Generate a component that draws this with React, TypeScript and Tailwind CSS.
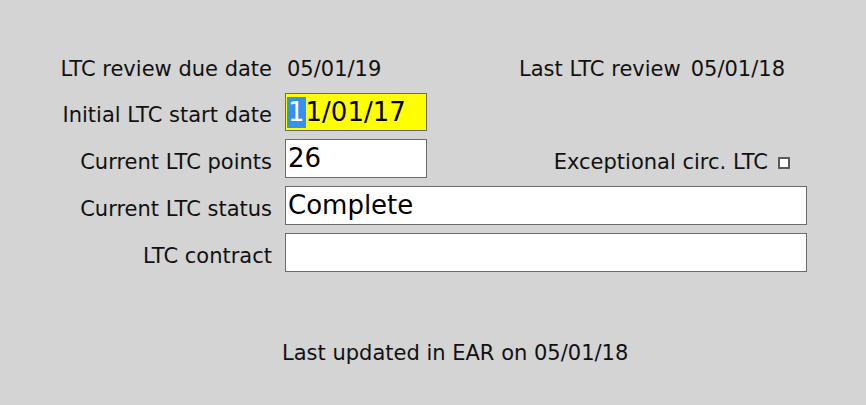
import React from "react";

const font = { fontFamily: '"DejaVu Sans", Verdana, sans-serif' };

export default function App() {
  return (
    <div
      className="w-[866px] h-[405px] bg-[#d4d4d4] text-[21px] text-[#111] relative overflow-hidden"
      style={font}
    >
      <div className="pt-[51px] grid grid-cols-[272px_522px] gap-x-[13px]">
        {/* Row 1 */}
        <div className="h-[38px] flex items-center justify-end whitespace-nowrap">LTC review due date</div>
        <div className="h-[38px] flex items-center justify-between pr-[22px] whitespace-nowrap">
          <span className="pl-[2px]">05/01/19</span>
          <span>
            Last LTC review<span className="ml-[10px]">05/01/18</span>
          </span>
        </div>

        {/* Row 2 */}
        <div className="mt-[4px] h-[38px] pt-[8px] flex items-center justify-end whitespace-nowrap">Initial LTC start date</div>
        <div className="mt-[4px] h-[38px]">
          <div className="w-[142px] h-[38px] bg-[#ffff00] border border-[#6b6b6b] flex items-center pl-[1px] text-[26px] text-black">
            <span className="bg-[#3591f0] text-white px-[1px] leading-[31px]">1</span>
            <span>1/01/17</span>
          </div>
        </div>

        {/* Row 3 */}
        <div className="mt-[8px] h-[39px] pt-[8px] flex items-center justify-end whitespace-nowrap">Current LTC points</div>
        <div className="mt-[8px] h-[39px] flex items-center justify-between pr-[17px]">
          <div className="w-[142px] h-[39px] bg-white border border-[#6b6b6b] flex items-center pl-[2px] text-[26px] text-black">
            26
          </div>
          <div className="h-[39px] pt-[8px] flex items-center whitespace-nowrap">
            <span>Exceptional circ. LTC</span>
            <span className="ml-[10px] w-[12px] h-[12px] border-2 border-[#5a5a5a] bg-white inline-block" />
          </div>
        </div>

        {/* Row 4 */}
        <div className="mt-[8px] h-[39px] pt-[8px] flex items-center justify-end whitespace-nowrap">Current LTC status</div>
        <div className="mt-[8px] h-[39px] bg-white border border-[#6b6b6b] flex items-center pl-[2px] text-[26px] text-black">
          Complete
        </div>

        {/* Row 5 */}
        <div className="mt-[8px] h-[39px] pt-[8px] flex items-center justify-end whitespace-nowrap">LTC contract</div>
        <div className="mt-[8px] h-[39px] bg-white border border-[#6b6b6b]" />
      </div>

      <div className="mt-[66px] pl-[282px] whitespace-nowrap">Last updated in EAR on 05/01/18</div>
    </div>
  );
}
